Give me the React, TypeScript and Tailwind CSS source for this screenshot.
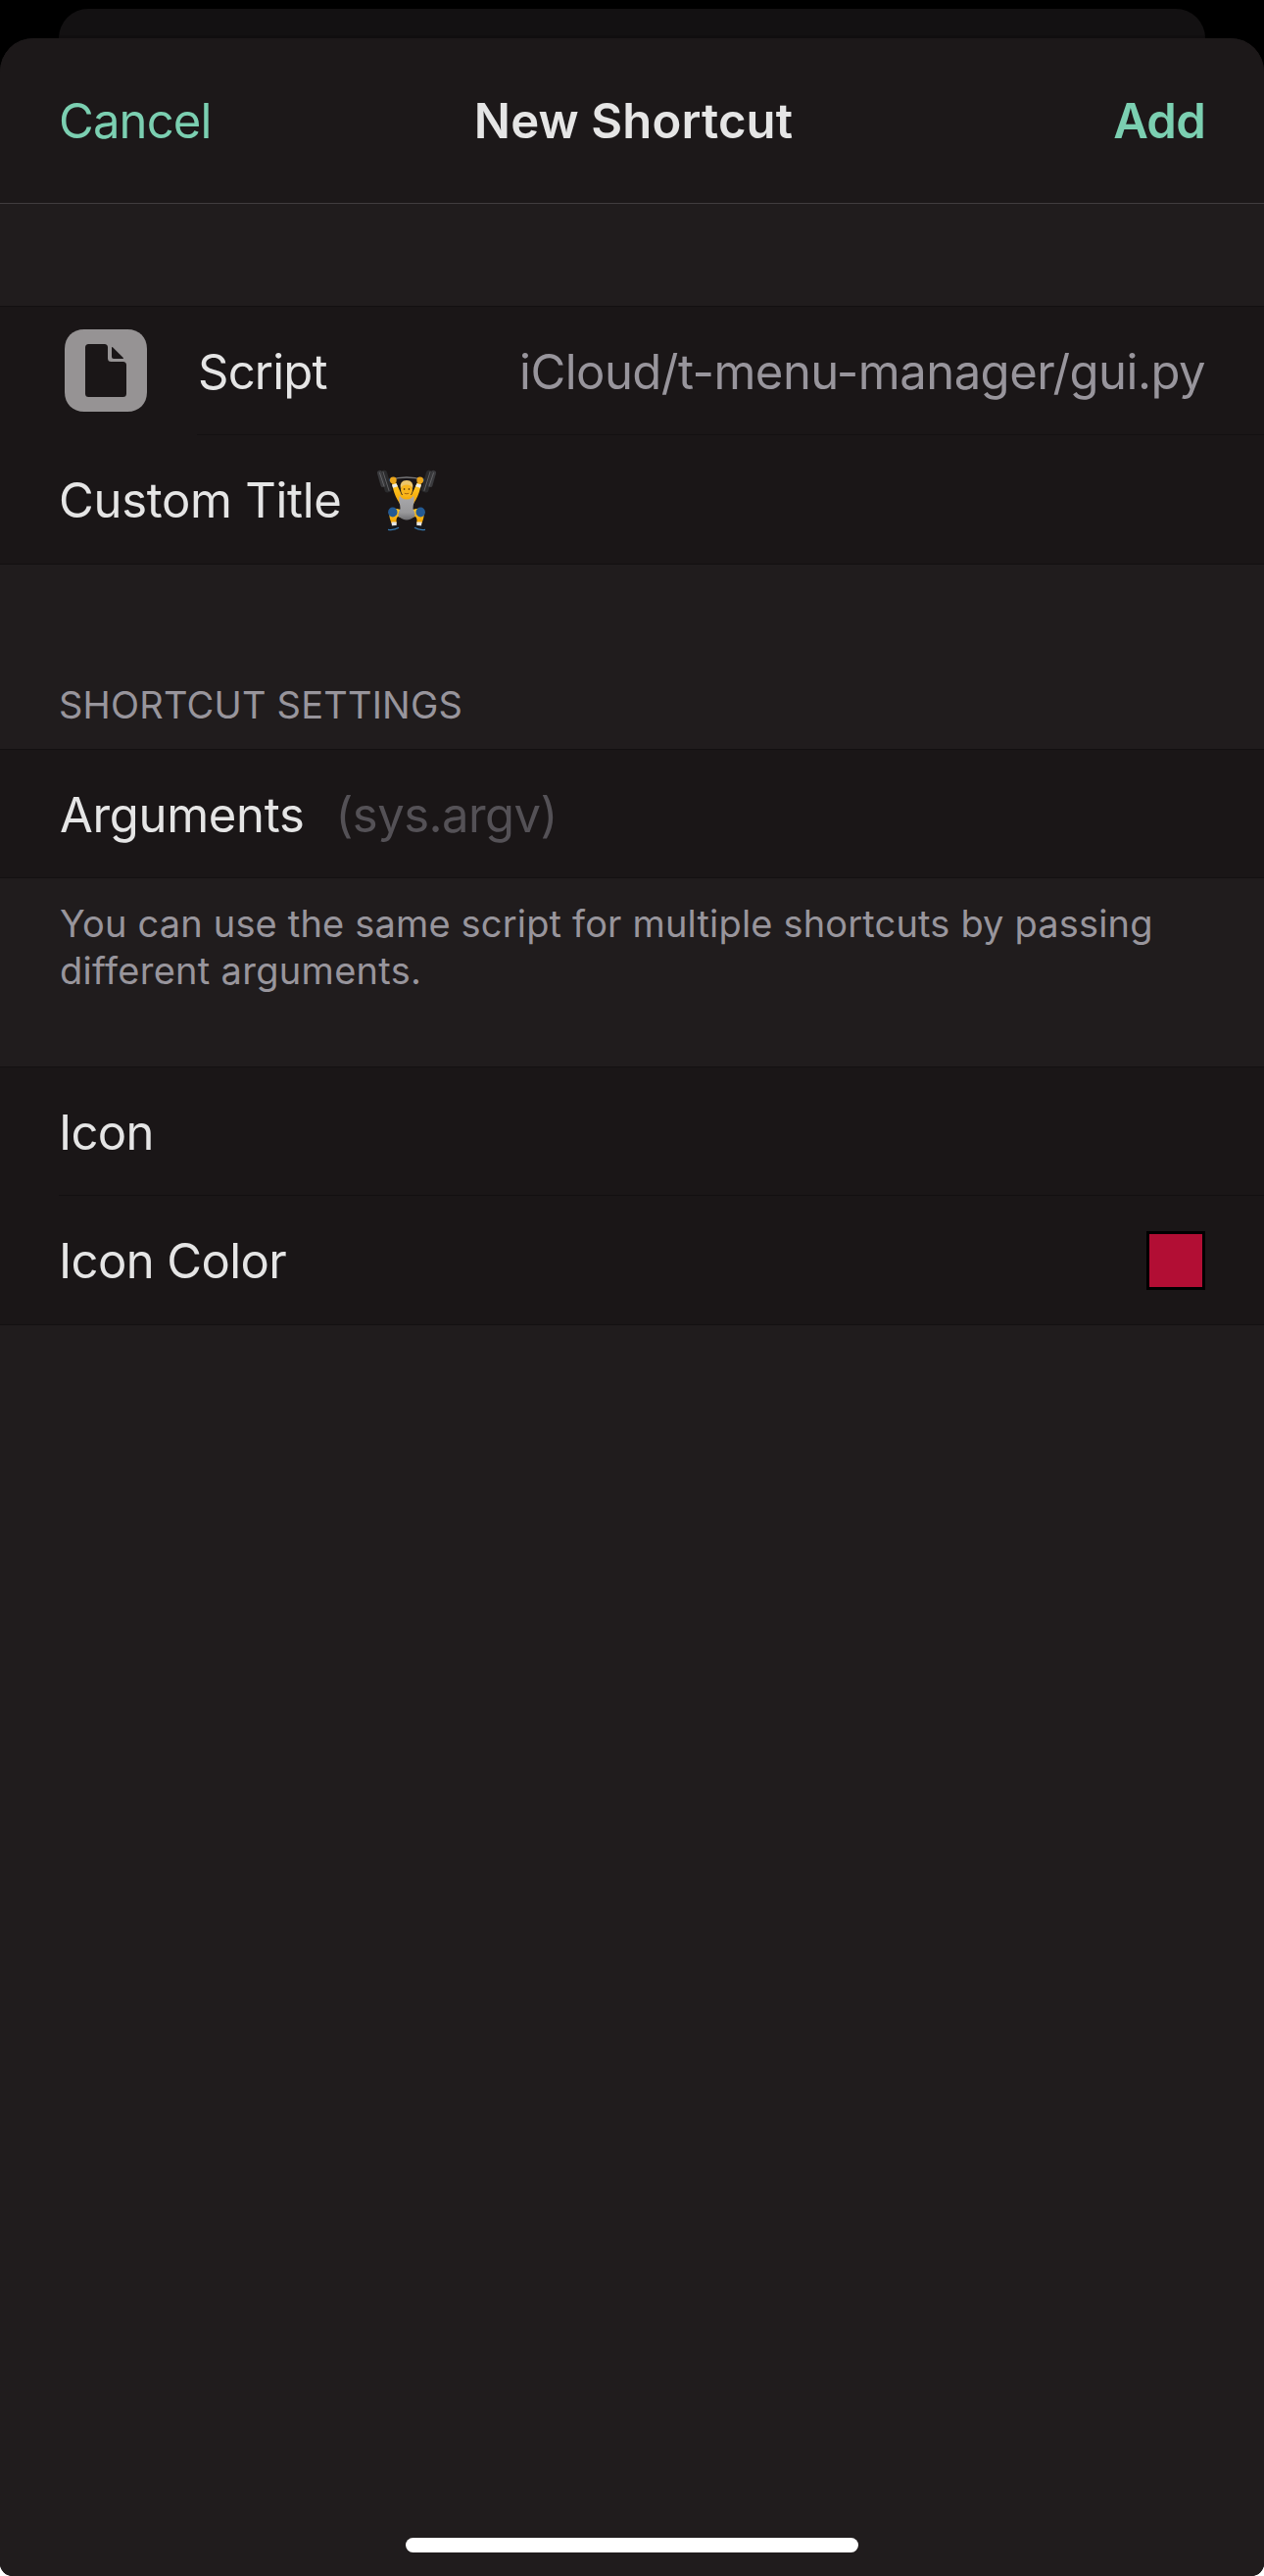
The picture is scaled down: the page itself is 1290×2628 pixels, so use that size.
import type { ReactNode } from "react";

function FileIcon() {
  return (
    <svg width="84" height="84" viewBox="0 0 84 84" className="mb-px shrink-0">
      <path
        fill="#969394"
        d="M20 0H64C76 0 84 8 84 20V64C84 76 76 84 64 84H20C8 84 0 76 0 64V20C0 8 8 0 20 0Z"
      />
      <path
        fill="#1a1617"
        d="M24.500 15H40.500Q44 15 44 18.500V29.500Q44 33 47.500 33H59.500Q63 33 63 36.500V65.500Q63 69 59.500 69H24.500Q21 69 21 65.500V18.500Q21 15 24.500 15Z"
      />
      <path fill="#1a1617" d="M48 18.500Q48 17.500 49 18.300L59.800 29Q60.500 30 59.300 30H50Q48 30 48 28Z" />
    </svg>
  );
}

function WeightLifter() {
  return (
    <svg width="60" height="64" viewBox="0 0 60 64" role="img" aria-label="🏋️" className="shrink-0">
      <defs>
        <linearGradient id="skin" x1="0" y1="0" x2="0" y2="1">
          <stop offset="0" stopColor="#ffc928" />
          <stop offset="1" stopColor="#f2a100" />
        </linearGradient>
        <linearGradient id="suit" x1="0" y1="0" x2="0" y2="1">
          <stop offset="0" stopColor="#a9a9ac" />
          <stop offset="0.7" stopColor="#98989a" />
          <stop offset="1" stopColor="#6f6f72" />
        </linearGradient>
        <g id="plates">
          <rect x="5" y="0.800" width="7.500" height="23" rx="3" transform="rotate(-16 8 12)" fill="#2b2b2d" />
          <rect x="1.800" y="0.800" width="5" height="17.500" rx="2.200" transform="rotate(-16 4 10)" fill="#3a3a3d" />
          <path d="M6 2.500L12 21.500M2.500 3.500L7 17" stroke="#66666a" strokeWidth="0.900" strokeLinecap="round" />
        </g>
      </defs>
      {/* barbell */}
      <path d="M13 10.500Q30 5.500 47 10.500" fill="none" stroke="#77777a" strokeWidth="1.600" />
      <path d="M10 11.500L15 10.300M50 11.500L45 10.300" stroke="#2c5d94" strokeWidth="2.500" />
      <use href="#plates" />
      <use href="#plates" transform="translate(60 0) scale(-1 1)" />
      {/* arms */}
      <path
        d="M15 14.500L19.300 13.500L25 26L35 26L40.700 13.500L45 14.500C43.500 22 41.500 28 37.500 34L36 37H24L22.500 34C18.500 28 16.500 22 15 14.500Z"
        fill="url(#skin)"
      />
      <path d="M15 15.500L19.500 14.200L21 17.300L16 18.800ZM45 15.500L40.500 14.200L39 17.300L44 18.800Z" fill="#ececec" />
      <circle cx="16.300" cy="11" r="3.400" fill="#eaa51b" />
      <circle cx="43.700" cy="11" r="3.400" fill="#eaa51b" />
      {/* legs */}
      <path
        d="M24 41Q11.500 37.500 11.800 44Q12.500 50 14.500 55H19.800Q18.800 50 21 48L27 50ZM36 41Q48.500 37.500 48.200 44Q47.500 50 45.500 55H40.200Q41.200 50 39 48L33 50Z"
        fill="url(#skin)"
      />
      {/* singlet */}
      <path
        d="M23 26.500Q25 30.500 30 30.500Q35 30.500 37 26.500Q38.500 32 36.800 36L36.500 40Q39 44 38.500 47.500Q34 51.500 30 51.500Q26 51.500 21.500 47.500Q21 44 23.500 40L23.200 36Q21.500 32 23 26.500Z"
        fill="url(#suit)"
      />
      {/* head */}
      <ellipse cx="30" cy="20.500" rx="6" ry="7.600" fill="#f8b51c" />
      <path d="M23.800 19.500Q22.500 11 30 11Q37.500 11 36.200 19.500Q34.500 15.500 30 15.500Q25.500 15.500 23.800 19.500Z" fill="#edc66a" />
      <ellipse cx="27.600" cy="20" rx="0.800" ry="1" fill="#67420b" />
      <ellipse cx="32.400" cy="20" rx="0.800" ry="1" fill="#67420b" />
      <path d="M27.800 24.300Q30 25.300 32.200 24.300" stroke="#a8660c" strokeWidth="1" fill="none" />
      {/* knee pads, socks and shoes */}
      <ellipse cx="15.800" cy="43.500" rx="4.700" ry="5" fill="#245a93" />
      <ellipse cx="44.200" cy="43.500" rx="4.700" ry="5" fill="#245a93" />
      <path d="M14.500 53.500H19.700V57.800H15ZM45.500 53.500H40.300V57.800H45Z" fill="#e6e6e6" />
      <path d="M11.500 59Q15 56.500 20 57L22 59Q17 62.500 11 61.500ZM48.500 59Q45 56.500 40 57L38 59Q43 62.500 49 61.500Z" fill="#17191d" />
      <path d="M11 61.300Q17 62.300 22 59.300M49 61.300Q43 62.300 38 59.300" stroke="#3677ae" strokeWidth="1.300" fill="none" />
    </svg>
  );
}

function Group({ children }: { children: ReactNode }) {
  return <section className="border-y border-[#131011] bg-[#1a1617]">{children}</section>;
}

export default function App() {
  return (
    <div className="bg-white">
      <div className="flex h-[2628px] flex-col overflow-hidden rounded-b-[13px] bg-black pt-[9px] font-['Inter',sans-serif] text-[49px] leading-[60px] text-[#e5e5e5]">
        <div className="mx-[60px] h-[30px] shrink-0 rounded-t-[30px] border-b-[3px] border-[#100e0f] bg-[#131112]" />
        <main className="flex flex-1 flex-col rounded-t-[34px] bg-[#201c1d]">
          <header className="grid h-[169px] grid-cols-3 items-center rounded-t-[34px] border-b border-[#403c3e] bg-[#1c1819] px-[60px] pt-[2px]">
            <button className="justify-self-start tracking-[-0.86px] text-[#7bcfb1]">Cancel</button>
            <h1 className="justify-self-center whitespace-nowrap pl-[3px] font-semibold tracking-[0.15px]">New Shortcut</h1>
            <button className="justify-self-end font-semibold tracking-[-0.74px] text-[#7bcfb1]">Add</button>
          </header>

          <div className="mt-[104px]">
            <Group>
              <div className="flex h-[131px] items-center pl-[66px]">
                <FileIcon />
                <div className="ml-[51px] flex h-full flex-1 items-center justify-between border-b border-[#131011] pr-[60px] pt-[3px]">
                  <span className="pl-px tracking-[-0.8px]">Script</span>
                  <span className="tracking-[-0.53px] text-[#98959c]">iCloud/t-menu-manager/gui.py</span>
                </div>
              </div>
              <div className="flex h-[131px] items-center pl-[60px] pt-[3px]">
                <span className="tracking-[-0.3px]">Custom Title</span>
                <span className="ml-[36px]">
                  <WeightLifter />
                </span>
              </div>
            </Group>
          </div>

          <h2 className="mt-[119px] pb-[20px] pl-[60px] text-[38px] leading-[49px] tracking-[0.2px] text-[#98959c]">
            SHORTCUT SETTINGS
          </h2>
          <Group>
            <div className="flex h-[130px] items-center pl-[61px] pt-[3px]">
              <span className="tracking-[-0.31px]">Arguments</span>
              <span className="ml-[32px] tracking-[-0.55px] text-[#545156]">(sys.argv)</span>
            </div>
          </Group>
          <p className="mb-[74px] mt-[22px] pl-[61px] text-[38px] leading-[48px] tracking-[0.17px] text-[#98959c]">
            You can use the same script for multiple shortcuts by passing
            <br />
            <span className="tracking-[0.3px]">different arguments.</span>
          </p>

          <Group>
            <div className="ml-[60px] flex h-[131px] items-center border-b border-[#131011] pt-[3px]">
              <span className="tracking-[-0.7px]">Icon</span>
            </div>
            <div className="ml-[60px] flex h-[131px] items-center justify-between pr-[60px]">
              <span className="pt-[3px] tracking-[-0.6px]">Icon Color</span>
              <span className="mt-px size-[60px] border-[3px] border-black bg-[#b20e34]" />
            </div>
          </Group>

          <div className="mb-[24px] mt-auto h-[15px] w-[462px] self-center rounded-full bg-white" />
        </main>
      </div>
    </div>
  );
}
